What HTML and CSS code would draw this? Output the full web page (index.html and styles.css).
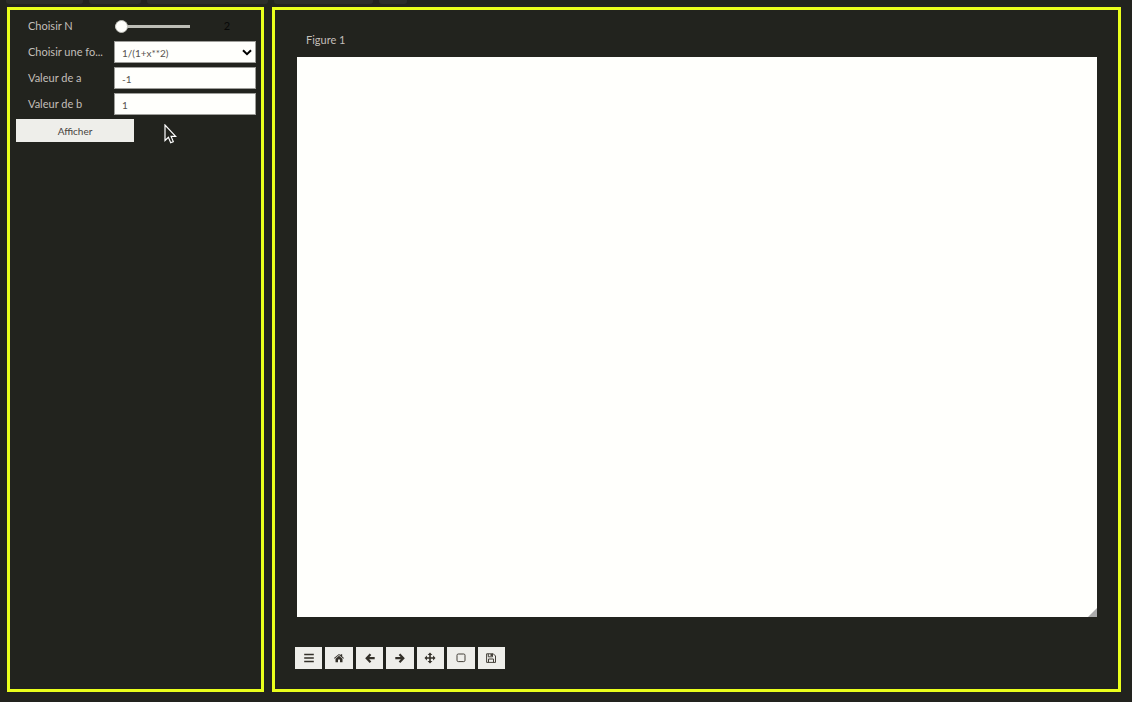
FILE: index.html
```html
<!DOCTYPE html>
<html lang="fr">
<head>
<meta charset="utf-8">
<title>Figure 1</title>
<link rel="stylesheet" href="styles.css">
</head>
<body>
<div class="tabs" aria-hidden="true">
  <span class="tab tab-m"></span><span class="tab tab-s"></span><span class="tab tab-l"></span><span class="tab tab-n"></span><span class="tab tab-xs"></span>
</div>
<main class="panels">
  <form class="panel controls">
    <div class="row">
      <label class="label" for="n">Choisir N</label>
      <div class="slider"><input class="range" id="n" type="range" min="2" max="20" value="2"><output class="readout" for="n">2</output></div>
    </div>
    <div class="row">
      <label class="label" for="fn">Choisir une fo...</label>
      <div class="select-wrap">
        <select class="field" id="fn"><option>1/(1+x**2)</option></select>
        <svg class="chevron" viewBox="0 0 10 7" aria-hidden="true"><path d="M1 1.2l4 4 4-4" fill="none" stroke="#000" stroke-width="2"/></svg>
      </div>
    </div>
    <div class="row">
      <label class="label" for="a">Valeur de a</label>
      <input class="field" id="a" type="text" value="-1">
    </div>
    <div class="row">
      <label class="label" for="b">Valeur de b</label>
      <input class="field" id="b" type="text" value="1">
    </div>
    <button class="button submit" type="button">Afficher</button>
    <svg class="cursor" viewBox="0 0 13 20" aria-hidden="true"><path d="M1 1v15.5l3.4-3.2 2.3 5.4 2.6-1.1-2.2-5.2h4.6z" fill="#22231e" stroke="#fff" stroke-width="1.2"/></svg>
  </form>
  <section class="panel figure">
    <h1 class="title">Figure 1</h1>
    <div class="canvas"><svg class="grip" viewBox="0 0 9 9" aria-hidden="true"><path d="M9 0v9H0z" fill="#aaa"/></svg></div>
    <div class="toolbar">
      <button class="button tool" type="button" aria-label="Menu"><svg class="icon" viewBox="0 0 12 12"><path d="M1.2 2.5h9.6M1.2 6h9.6M1.2 9.5h9.6" stroke="#333029" stroke-width="1.6"/></svg></button>
      <button class="button tool" type="button" aria-label="Accueil"><svg class="icon" viewBox="0 0 12 12"><path d="M6 3.8l3.5 2.9v3.5H7V7.6H5v2.6H2.5V6.7zM6 2l1.6 1.3V2.2h1.6v2.4L11 6.1l-.6.7L6 3.1 1.6 6.8 1 6.1z" fill="#333029"/></svg></button>
      <button class="button tool" type="button" aria-label="Précédent"><svg class="icon" viewBox="0 0 12 12"><path d="M6.5 2.2L2.7 6.2l3.8 4M2.9 6.2h7.8" fill="none" stroke="#333029" stroke-width="2.2"/></svg></button>
      <button class="button tool" type="button" aria-label="Suivant"><svg class="icon" viewBox="0 0 12 12"><path d="M5.5 2.2l3.8 4-3.8 4M9.1 6.2H1.3" fill="none" stroke="#333029" stroke-width="2.2"/></svg></button>
      <button class="button tool" type="button" aria-label="Déplacer"><svg class="icon" viewBox="0 0 12 12"><path d="M6 .5l2.4 2.4H6.8v2.3h2.3V3.6L11.5 6 9.1 8.4V6.8H6.8v2.3h1.6L6 11.5 3.6 9.1h1.6V6.8H2.9v1.6L.5 6l2.4-2.4v1.6h2.3V2.9H3.6z" fill="#333029"/></svg></button>
      <button class="button tool" type="button" aria-label="Zoom"><svg class="icon" viewBox="0 0 12 12"><rect x="2" y="2" width="8" height="7.6" rx="1.3" fill="none" stroke="#444039"/></svg></button>
      <button class="button tool" type="button" aria-label="Enregistrer"><svg class="icon" viewBox="0 0 12 12"><path d="M1.6 1.8h6.7l2.2 2.2v6.4H1.6zM3.3 1.8v3h4.2v-3M3.5 10.3V7h5v3.3" fill="none" stroke="#444039"/><path d="M5.5 2h1.5v2H5.5z" fill="#444039"/></svg></button>
    </div>
  </section>
</main>
</body>
</html>
```
FILE: styles.css
```css
* { box-sizing: border-box; }

body {
  margin: 0;
  min-height: 100vh;
  display: flex;
  flex-direction: column;
  background: #22231e;
  color: #c2bfba;
  font: 11px/16px Lato, "Noto Sans", sans-serif;
}

.tabs {
  display: flex;
  gap: 6px;
  height: 7px;
  padding: 0 6px;
}
.tab {
  height: 4px;
  background: #2d2e2a;
  border-radius: 0 0 3px 3px;
}
.tab-m { width: 77px; }
.tab-s { width: 52px; }
.tab-l { width: 121px; }
.tab-n { width: 99px; }
.tab-xs { width: 28px; }

.panels {
  flex: 1;
  display: flex;
  gap: 8px;
  padding: 0 11px 10px 7px;
}
.panel { border: 3px solid #eaff1c; }

.controls {
  position: relative;
  flex: 0 0 257px;
  display: flex;
  flex-direction: column;
  gap: 4px;
  padding: 5px 5px 5px 6px;
}
.row {
  display: flex;
  align-items: center;
  height: 22px;
}
.label {
  flex: 0 0 98px;
  padding-left: 12px;
  white-space: nowrap;
}
.field {
  appearance: none;
  flex: 1;
  width: 100%;
  min-width: 0;
  height: 22px;
  margin: 0;
  padding: 2px 7px 0;
  border: 1px solid #9e9e9a;
  border-radius: 0;
  background: #fffffc;
  color: #57534f;
  font: inherit;
  font-size: 10px;
}
.select-wrap {
  position: relative;
  flex: 1;
  display: flex;
}
.chevron {
  position: absolute;
  right: 4px;
  top: 8px;
  width: 10px;
  height: 7px;
  pointer-events: none;
}

.slider {
  flex: 1;
  display: flex;
  align-items: center;
}
.range {
  appearance: none;
  width: 75px;
  height: 14px;
  margin: 0 0 0 1px;
  background: transparent;
}
.range::-webkit-slider-runnable-track {
  height: 3px;
  background: #bdbdb6;
}
.range::-webkit-slider-thumb {
  appearance: none;
  width: 13px;
  height: 13px;
  margin-top: -5px;
  border: 1px solid #bdbdb6;
  border-radius: 50%;
  background: #fffffc;
}
.readout {
  flex: 1;
  padding-left: 8px;
  text-align: center;
  color: #080808;
}

.button {
  border: 0;
  border-radius: 0;
  background: #eeeeea;
  color: #48443f;
  font: inherit;
  font-size: 10px;
}
.submit {
  width: 118px;
  height: 23px;
}
.cursor {
  position: absolute;
  left: 154px;
  top: 114px;
  width: 13px;
  height: 20px;
}

.figure {
  flex: 1;
  display: flex;
  flex-direction: column;
  padding: 22px 21px 20px 20px;
}
.title {
  margin: 0 0 9px;
  padding-left: 11px;
  font-size: 11px;
  font-weight: 400;
}
.canvas {
  position: relative;
  flex: 1;
  margin-left: 2px;
  background: #fffffc;
}
.grip {
  position: absolute;
  right: 0;
  bottom: 0;
  width: 9px;
  height: 9px;
}
.toolbar {
  display: flex;
  gap: 3px;
  width: 210px;
  margin-top: 30px;
}
.tool {
  flex: 1;
  display: flex;
  align-items: center;
  justify-content: center;
  height: 22px;
  padding: 0;
}
.icon {
  width: 12px;
  height: 12px;
}
```
